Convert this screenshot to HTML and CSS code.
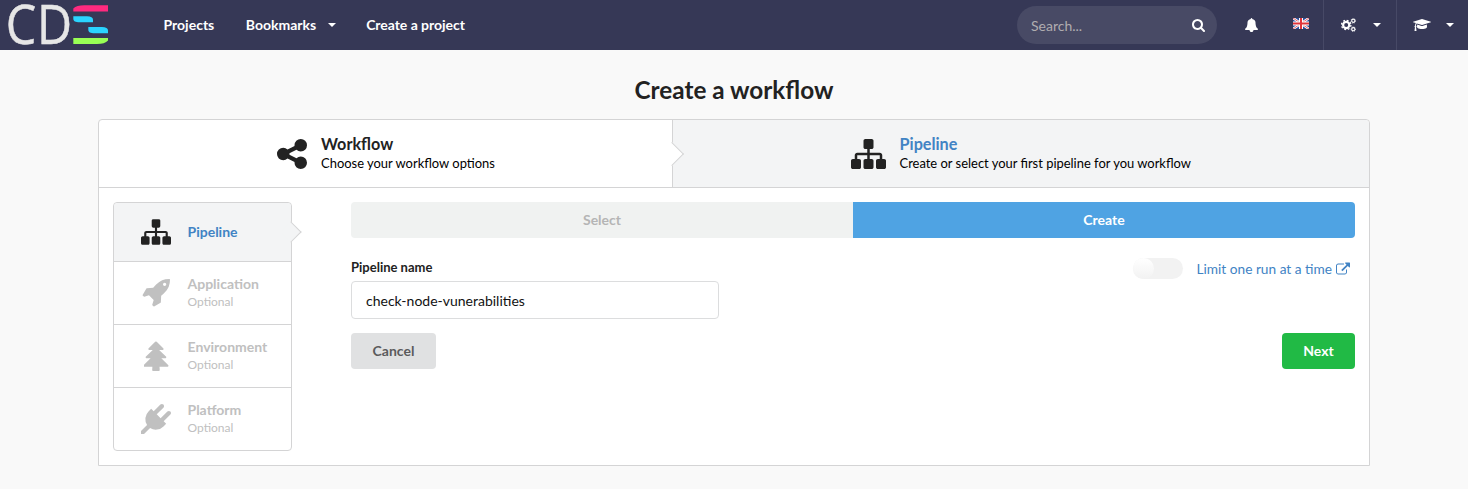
FILE: index.html
```html
<!DOCTYPE html>
<html lang="en">
<head>
<meta charset="utf-8">
<title>CDS - Create a workflow</title>
<link rel="stylesheet" href="styles.css">
</head>
<body>
<svg class="defs" width="0" height="0">
  <symbol id="sitemap" viewBox="0 128 1792 1536"><path d="M1792 1248v320q0 40-28 68t-68 28h-320q-40 0-68-28t-28-68v-320q0-40 28-68t68-28h96v-192h-512v192h96q40 0 68 28t28 68v320q0 40-28 68t-68 28h-320q-40 0-68-28t-28-68v-320q0-40 28-68t68-28h96v-192h-512v192h96q40 0 68 28t28 68v320q0 40-28 68t-68 28h-320q-40 0-68-28t-28-68v-320q0-40 28-68t68-28h96v-192q0-52 38-90t90-38h512v-192h-96q-40 0-68-28t-28-68v-320q0-40 28-68t68-28h320q40 0 68 28t28 68v320q0 40-28 68t-68 28h-96v192h512q52 0 90 38t38 90v192h96q40 0 68 28t28 68z"/></symbol>
</svg>
<nav class="navbar">
  <svg class="logo" width="101" height="50" viewBox="0 0 101 50">
    <text class="logo-text" transform="translate(-2.2 44) scale(.88 .99)" x="0 35.5">CD</text>
    <path fill="#ff2a7f" d="M65.300 11.400V8.500c2-2.300 6-3.200 11-3.200H100v6.100z"/>
    <path fill="#2ad4ff" d="M65.300 16.200H79c4 0 6 1.200 6 3.500v2.500H71.500c-4 0-6.200-1-6.200-3.500z"/>
    <path fill="#2ad4ff" d="M80.300 27H94c4 0 6 1.200 6 3.500v2.700H86.500c-4 0-6.200-1-6.200-3.500z"/>
    <path fill="#99ff55" d="M65.300 38H100v2.500c-2 2.500-6 3.500-11 3.500H65.300z"/>
  </svg>
  <div class="menu">
    <a>Projects</a>
    <a>Bookmarks<i class="caret"></i></a>
    <a>Create a project</a>
  </div>
  <div class="search"><span>Search...</span>
    <svg width="13" height="13" viewBox="64 128 1664 1664"><path d="M1216 832q0-185-131.500-316.500t-316.500-131.500-316.500 131.500-131.500 316.500 131.500 316.500 316.500 131.500 316.500-131.500 131.500-316.500zm512 832q0 52-38 90t-90 38q-54 0-90-38l-343-342q-179 124-399 124-143 0-273.500-55.500t-225-150-150-225-55.500-273.500 55.500-273.500 150-225 225-150 273.500-55.500 273.500 55.500 225 150 150 225 55.500 273.500q0 220-124 399l343 343q37 37 37 90z"/></svg>
  </div>
  <div class="tool bell"><svg width="13" height="14" viewBox="0 0 1664 1792"><path d="M1664 1408q0 52-38 90t-90 38h-448q0 106-75 181t-181 75-181-75-75-181h-448q-52 0-90-38t-38-90q50-42 91-88t85-119.500 74.500-158.500 50-206 19.500-260q0-152 117-282.500t307-158.500q-8-19-8-39 0-40 28-68t68-28 68 28 28 68q0 20-8 39 190 28 307 158.500t117 282.500q0 139 19.500 260t50 206 74.500 158.500 85 119.500 91 88z"/></svg></div>
  <div class="tool flag"><svg width="16" height="11" viewBox="0 0 16 11">
    <path fill="#2b4f9e" d="M0 0h16v11H0z"/>
    <path stroke="#fff" stroke-width="2.400" d="M0 0l16 11M16 0L0 11"/>
    <path stroke="#e03a40" stroke-width=".8" d="M0 0l16 11M16 0L0 11"/>
    <path stroke="#fff" stroke-width="4" d="M8 0v11M0 5.500h16"/>
    <path stroke="#e0343a" stroke-width="2" d="M8 0v11M0 5.500h16"/>
  </svg></div>
  <div class="tool split"><svg width="15" height="14" viewBox="0 0 15 14" class="cogs">
    <circle cx="5.200" cy="7" r="3.100" stroke-width="2.200"/>
    <circle cx="5.200" cy="7" r="4.700" stroke-width="1.300" stroke-dasharray="1.850 1.840"/>
    <circle cx="12.300" cy="2.800" r="1.600" stroke-width="1.100"/>
    <circle cx="12.300" cy="2.800" r="2.300" stroke-width=".8" stroke-dasharray=".9 .9"/>
    <circle cx="12.300" cy="11.200" r="1.600" stroke-width="1.100"/>
    <circle cx="12.300" cy="11.200" r="2.300" stroke-width=".8" stroke-dasharray=".9 .9"/>
  </svg><i class="caret"></i></div>
  <div class="tool split last"><svg width="18" height="14" viewBox="0 0 2304 1792"><path d="M1774 836l18 316q4 69-82 128t-235 93.500-323 34.500-323-34.500-235-93.500-82-128l18-316 574 181q22 7 48 7t48-7zm530-324q0 23-22 31l-1120 352q-4 1-10 1t-10-1l-652-206q-43 34-71 111.500t-34 178.500q63 36 63 109 0 69-58 107l58 433q2 14-8 25-9 11-24 11h-192q-15 0-24-11-10-11-8-25l58-433q-58-38-58-107 0-73 65-111 11-207 98-330l-333-104q-22-8-22-31t22-31l1120-352q4-1 10-1t10 1l1120 352q22 8 22 31z"/></svg><i class="caret"></i></div>
</nav>
<h2 class="title">Create a workflow</h2>
<main class="panel">
  <div class="steps">
    <div class="step first">
      <svg width="30" height="30" viewBox="128 128 1536 1536"><path d="M1344 1024q133 0 226.500 93.500t93.500 226.500-93.500 226.500-226.500 93.500-226.500-93.500-93.500-226.500q0-12 2-34l-360-180q-92 86-218 86-133 0-226.500-93.500t-93.500-226.500 93.500-226.500 226.500-93.500q126 0 218 86l360-180q-2-22-2-34 0-133 93.500-226.500t226.500-93.500 226.500 93.500 93.500 226.500-93.500 226.500-226.500 93.500q-126 0-218-86l-360 180q2 22 2 34t-2 34l360 180q92-86 218-86z"/></svg>
      <div><div class="step-title">Workflow</div><div class="step-desc">Choose your workflow options</div></div>
    </div>
    <div class="step active">
      <svg width="35" height="30"><use href="#sitemap"/></svg>
      <div><div class="step-title">Pipeline</div><div class="step-desc">Create or select your first pipeline for you workflow</div></div>
    </div>
  </div>
  <div class="body">
    <div class="side">
      <div class="item current">
        <span class="icon"><svg width="30" height="26"><use href="#sitemap"/></svg></span>
        <div class="name">Pipeline</div>
      </div>
      <div class="item">
        <span class="icon"><svg width="28" height="28" viewBox="0 0 1664 1664"><path d="M1440 320q0-40-28-68t-68-28-68 28-28 68 28 68 68 28 68-28 28-68zm224-288q0 249-75.500 430.500t-253.500 360.500q-81 80-195 176l-20 379q-2 16-16 26l-384 224q-7 4-16 4-12 0-23-9l-64-64q-13-14-8-32l85-276-281-281-276 85q-3 1-9 1-14 0-23-9l-64-64q-17-19-5-39l224-384q10-14 26-16l379-20q96-114 176-195 188-187 358-258t431-71q14 0 24 9.500t10 22.500z"/></svg></span>
        <div><div class="name">Application</div><div class="opt">Optional</div></div>
      </div>
      <div class="item">
        <span class="icon"><svg width="25" height="30" viewBox="160 0 1472 1824" preserveAspectRatio="none"><path d="M1600 1504q0 26-19 45t-45 19h-462q1 17 6 87.500t5 108.500q0 25-18 42.500t-43 17.500h-320q-25 0-43-17.500t-18-42.500q0-38 5-108.500t6-87.500h-462q-26 0-45-19t-19-45 19-45l402-403h-229q-26 0-45-19t-19-45 19-45l402-403h-197q-26 0-45-19t-19-45 19-45l384-384q19-19 45-19t45 19l384 384q19 19 19 45t-19 45-45 19h-197l402 403q19 19 19 45t-19 45-45 19h-229l402 403q19 19 19 45z"/></svg></span>
        <div><div class="name">Environment</div><div class="opt">Optional</div></div>
      </div>
      <div class="item">
        <span class="icon"><svg width="30" height="30" viewBox="0 0 1792 1792"><path d="M1755 453q37 38 37 90.500t-37 90.500l-401 400 150 150-160 160q-163 163-389.500 186.500t-411.500-100.500l-362 362h-181v-181l362-362q-124-185-100.500-411.500t186.500-389.500l160-160 150 150 400-401q38-37 91-37t90 37 37 90.500-37 90.500l-400 401 234 234 401-400q38-37 91-37t90 37z"/></svg></span>
        <div><div class="name">Platform</div><div class="opt">Optional</div></div>
      </div>
    </div>
    <div class="form">
      <div class="tabs"><button>Select</button><button class="on">Create</button></div>
      <div class="fields">
        <div class="field"><label>Pipeline name</label><input type="text" value="check-node-vunerabilities"></div>
        <div class="limit"><span class="toggle"><span class="knob"></span></span><a>Limit one run at a time</a><svg width="14" height="14" viewBox="0 0 1792 1664"><path d="M1408 928v320q0 119-84.500 203.500t-203.500 84.500h-832q-119 0-203.500-84.500t-84.500-203.500v-832q0-119 84.500-203.500t203.500-84.500h704q14 0 23 9t9 23v64q0 14-9 23t-23 9h-704q-66 0-113 47t-47 113v832q0 66 47 113t113 47h832q66 0 113-47t47-113v-320q0-14 9-23t23-9h64q14 0 23 9t9 23zm384-864v512q0 26-19 45t-45 19-45-19l-176-176-652 652q-10 10-23 10t-23-10l-114-114q-10-10-10-23t10-23l652-652-176-176q-19-19-19-45t19-45 45-19h512q26 0 45 19t19 45z"/></svg></div>
      </div>
      <div class="actions"><button class="cancel">Cancel</button><button class="next">Next</button></div>
    </div>
  </div>
</main>
</body>
</html>
```
FILE: styles.css
```css
* { box-sizing: border-box; }
body { margin: 0; background: #f9f9f9; color: #222; font: 14px/20px Lato, "Liberation Sans", sans-serif; height: 489px; overflow: hidden; }
svg { display: block; flex: none; fill: currentColor; }
.defs { position: absolute; }
button, input { font: inherit; margin: 0; }

.navbar { display: flex; align-items: center; height: 50px; background: #363856; color: #fff; }
.logo { margin-left: 8px; overflow: visible; }
.logo-text { font: 400 55px "Open Sans", sans-serif; fill: #e6e6e6; stroke: #e6e6e6; stroke-width: .5px; }
.menu { display: flex; margin-left: 54.500px; gap: 31.500px; font-weight: 700; }
.menu a { display: flex; align-items: center; }
.menu a:last-child { margin-left: -1px; letter-spacing: -.04px; }
.caret { width: 0; border: 4px solid transparent; border-top-color: #fff; border-bottom: 0; }
.menu .caret { margin-left: 11.500px; }
.search { display: flex; align-items: center; justify-content: space-between; width: 200px; height: 38px; margin-left: auto; padding: 2px 12px 0 14px; border-radius: 19px; background: #484a65; }
.search span { color: #b0adb0; }
.search svg { margin-top: -2px; }
.tool { display: flex; align-items: center; height: 50px; }
.bell { margin-left: 28px; }
.flag { margin-left: 35px; padding-bottom: 4px; width: 30px; }
.split { width: 73px; border-left: 1px solid #474966; padding: 0 15px 0 17px; justify-content: space-between; }
.last { width: 72px; padding-right: 14px; padding-left: 16px; }
.cogs { fill: none; stroke: #fff; }

.title { margin: 24px 0 0; height: 45px; font-size: 24.300px; line-height: 31px; text-align: center; }
.panel { width: 1272px; height: 347px; margin-left: 98px; border: 1px solid #d4d4d5; border-radius: 4px 4px 0 0; background: #fff; }
.steps { display: flex; height: 68px; border-bottom: 1px solid #d4d4d5; }
.step { position: relative; display: flex; align-items: center; justify-content: center; gap: 14px; padding: 0 0 1px 1px; }
.first { width: 574px; border-right: 1px solid #d4d4d5; border-radius: 4px 0 0; }
.active { flex: 1; gap: 13.500px; padding-left: 0; background: #f3f4f5; border-radius: 0 4px 0 0; }
.step svg { position: relative; top: .5px; }
.first::after, .current::after { content: ""; position: absolute; top: 50%; right: 0; width: 16px; height: 16px; background: #fff; border: solid #d4d4d5; border-width: 0 1px 1px 0; transform: translate(50%, -50%) rotate(-45deg); }
.first::after { z-index: 1; }
.step-title { font-size: 16.200px; line-height: 20px; font-weight: 700; }
.step-desc { font-size: 12.950px; line-height: 18px; color: #000; }
.active .step-title { color: #4183c4; }

.body { display: flex; padding: 14px; }
.side { width: 179px; height: 249px; border: 1px solid #d4d4d5; border-radius: 4px; }
.item { position: relative; display: flex; align-items: center; height: 63px; padding-left: 27px; border-bottom: 1px solid #d4d4d5; color: #c0c0c0; }
.item:last-child { height: 62px; border: 0; }
.current { height: 59px; background: #f3f4f5; color: #222; border-radius: 4px 4px 0 0; }
.current::after { background: #f3f4f5; width: 14px; height: 14px; }
.icon { display: flex; justify-content: center; width: 30px; margin-right: 16.500px; }
.name { font-weight: 700; line-height: 18px; }
.current .name { color: #4183c4; }
.opt { font-size: 12px; line-height: 18px; }

.form { width: 1004px; margin-left: 59px; }
.tabs { display: flex; }
.tabs button, .actions button { height: 36px; padding: 0; border: 0; border-radius: 4px; font-weight: 700; }
.tabs button { flex: 1; background: #f0f2f1; color: #b5b5b5; border-radius: 4px 0 0 4px; }
.tabs .on { background: #4fa3e3; color: #fff; border-radius: 0 4px 4px 0; }
.fields { display: flex; justify-content: space-between; margin-top: 20px; }
.field { width: 368px; }
.field label { display: block; font-size: 13px; line-height: 19px; margin-bottom: 4px; font-weight: 700; }
.field input { display: block; width: 100%; height: 38px; padding: 0 14px; border: 1px solid #dcddde; border-radius: 4px; color: #111; }
.limit { display: flex; align-items: center; height: 21px; padding-right: 5px; color: #4183c4; }
.limit a { font-size: 13.700px; }
.toggle { width: 50px; height: 21px; border-radius: 11px; background: #f2f2f2; margin-right: 13px; }
.knob { display: block; width: 21px; height: 21px; border-radius: 50%; background: linear-gradient(#fff, #f2f2f2); }
.limit svg { margin-left: 4px; }
.actions { display: flex; justify-content: space-between; margin-top: 14px; }
.actions .cancel { width: 85px; background: #e0e1e2; color: #5b5b5c; }
.actions .next { width: 73px; background: #21ba45; color: #fff; }
```
